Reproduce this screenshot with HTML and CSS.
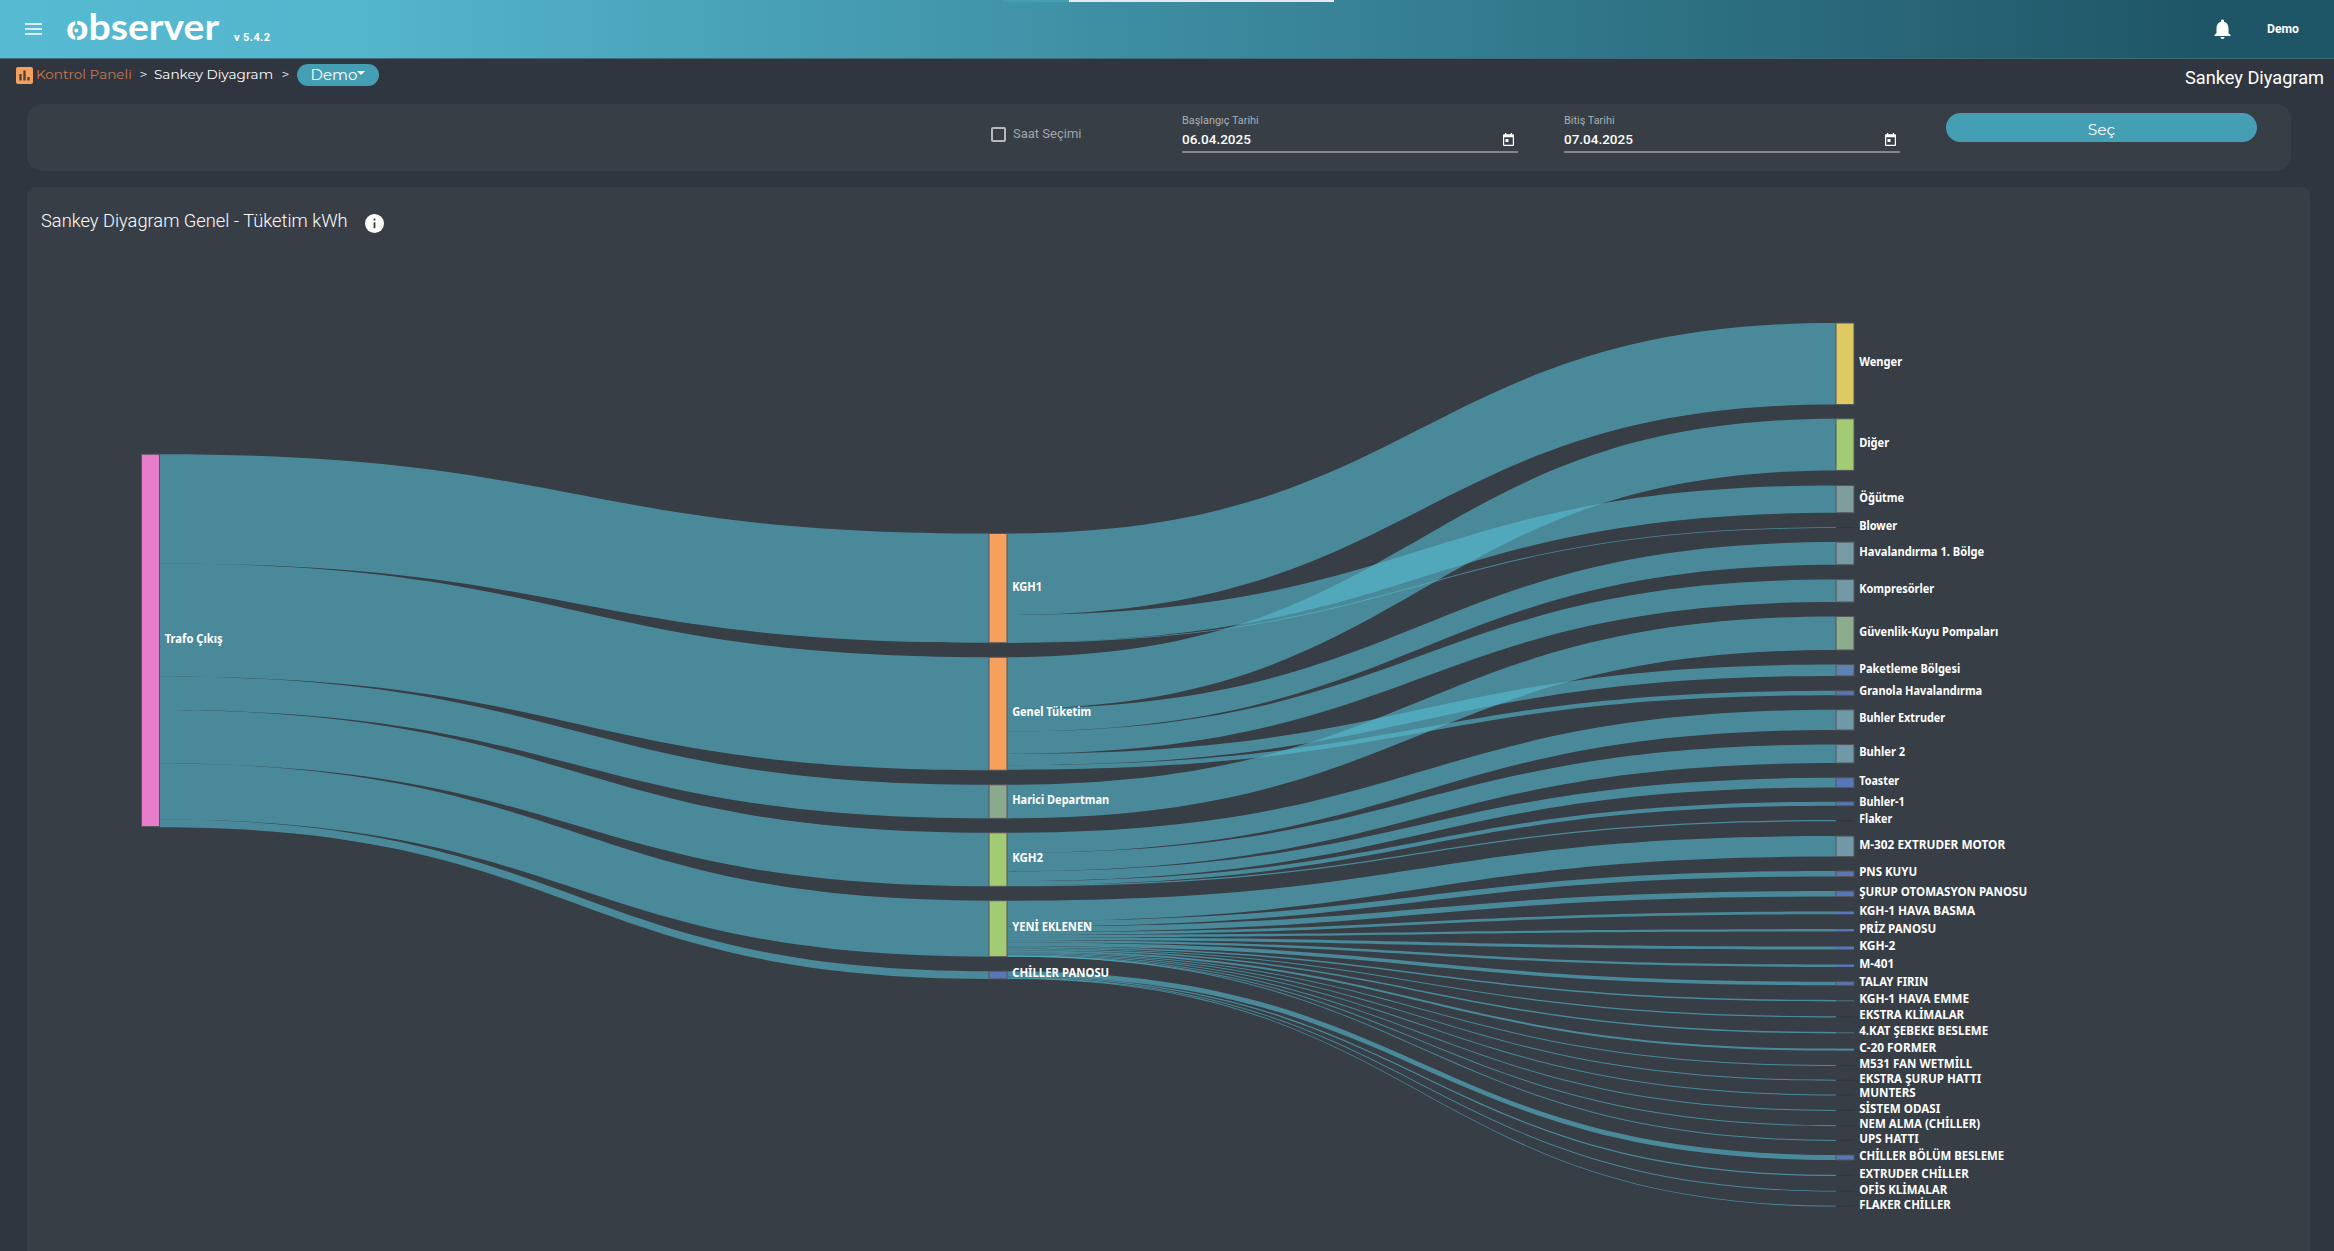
FILE: index.html
```
<!DOCTYPE html>
<html lang="tr">
<head>
  <meta charset="UTF-8" />
  <meta name="viewport" content="width=device-width, initial-scale=1.0"/>
  <title>Observer - Sankey Diyagram</title>
  <link rel="stylesheet" href="styles.css">
</head>
<body>
  <header class="topbar">
    <div class="loading-bar"></div>
    <svg class="menu-icon" viewBox="0 0 17 12" width="17" height="12"><path d="M0 1h17M0 6h17M0 11h17" stroke="#fff" stroke-width="1.7"/></svg>
    <svg class="logo" width="158" height="54" viewBox="0 -10 158 54">
      <text class="logo-text" x="0" y="29" textLength="153" lengthAdjust="spacingAndGlyphs">observer</text>
      <path d="M10.300 8v6.500M10.300 24.500v7" stroke="#55b8d0" stroke-width="2"/>
      <circle cx="10.300" cy="19.500" r="2" fill="#fff"/>
    </svg>
    <span class="version">v 5.4.2</span>
    <svg class="bell" viewBox="4 2 16 20" width="17" height="20"><path fill="#fff" d="M12 22c1.100 0 2-.9 2-2h-4c0 1.100.9 2 2 2zm6-6v-5c0-3.070-1.630-5.640-4.500-6.320V4c0-.83-.67-1.500-1.500-1.500s-1.500.67-1.500 1.500v.68C7.640 5.360 6 7.920 6 11v5l-2 2v1h16v-1l-2-2z"/></svg>
    <span class="user">Demo</span>
  </header>

  <div class="subbar">
    <nav class="breadcrumb">
      <svg class="crumb-icon" width="17" height="17" viewBox="0 0 17 17">
        <rect width="17" height="17" rx="2" fill="#f5a05c"/>
        <path d="M4.500 7v6.500M8.500 3.500v10M12.500 10v3.500" stroke="#4a4444" stroke-width="2.400"/>
      </svg>
      <a class="crumb crumb-link">Kontrol Paneli</a>
      <span class="sep">&gt;</span>
      <span class="crumb crumb-page">Sankey Diyagram</span>
      <span class="sep">&gt;</span>
      <button class="pill">Demo<span class="caret"></span></button>
    </nav>
    <h1 class="page-title">Sankey Diyagram</h1>
  </div>

  <section class="card filters">
    <label class="check"><span class="box"></span>Saat Seçimi</label>
    <div class="field">
      <span class="field-label">Başlangıç Tarihi</span>
      <div class="field-row">
        <span>06.04.2025</span>
        <svg width="11" height="13" viewBox="0 0 11 13"><path fill="#fff" fill-rule="evenodd" d="M2 0h1.300v1.300h4.400V0H9v1.300h1a1 1 0 0 1 1 1V12a1 1 0 0 1-1 1H1a1 1 0 0 1-1-1V2.300a1 1 0 0 1 1-1h1zM1.200 4.300v7.500h8.600V4.300zM2.500 6h3v3h-3z"/></svg>
      </div>
    </div>
    <div class="field">
      <span class="field-label">Bitiş Tarihi</span>
      <div class="field-row">
        <span>07.04.2025</span>
        <svg width="11" height="13" viewBox="0 0 11 13"><path fill="#fff" fill-rule="evenodd" d="M2 0h1.300v1.300h4.400V0H9v1.300h1a1 1 0 0 1 1 1V12a1 1 0 0 1-1 1H1a1 1 0 0 1-1-1V2.300a1 1 0 0 1 1-1h1zM1.200 4.300v7.500h8.600V4.300zM2.500 6h3v3h-3z"/></svg>
      </div>
    </div>
    <button class="select-btn">Seç</button>
  </section>

  <section class="card chart-card">
    <div class="chart-head">
      <h2>Sankey Diyagram Genel - Tüketim kWh</h2>
      <svg width="19" height="19" viewBox="0 0 19 19"><circle cx="9.500" cy="9.500" r="9.500" fill="#fff"/><path d="M9.500 4.600v2M9.500 8.200v6" stroke="#373e46" stroke-width="1.800"/></svg>
    </div>
    <svg id="sankey" class="sankey" width="2283" height="1010" viewBox="27 241 2283 1010"></svg>
  </section>

  <script src="sankey.js"></script>
</body>
</html>
```
FILE: styles.css
```
* {
  box-sizing: border-box;
}

body {
  margin: 0;
  height: 1251px;
  overflow: hidden;
  background: #2f3640;
  color: white;
  font-family: Roboto, sans-serif;
}

h1, h2 {
  margin: 0;
  font-weight: 400;
}

button {
  border: none;
  color: white;
  background: #459fb4;
  font-family: Montserrat, Inter, sans-serif;
}

.topbar {
  position: relative;
  display: flex;
  align-items: center;
  height: 59px;
  padding: 0 35px 0 25px;
  background: linear-gradient(90deg, #56bad2, #54b6cd 15%, #1e5566 95%);
  border-bottom: 1px solid #3f6a78;
}

.loading-bar {
  position: absolute;
  top: 0;
  left: 1003px;
  width: 331px;
  height: 2px;
  background: linear-gradient(90deg, #459fb4 66px, #e4eaec 66px);
}

.logo {
  margin: -2px 0 0 24px;
  overflow: visible;
}

.logo-text {
  font-family: Lato, sans-serif;
  font-weight: 700;
  font-size: 37px;
  fill: white;
}

.version {
  margin: 16px auto 0 10px;
  font-size: 11px;
  font-weight: 700;
  letter-spacing: 0.4px;
}

.user {
  margin: -1px 0 0 36px;
  font-size: 12.200px;
  font-weight: 700;
}

.subbar {
  display: flex;
  justify-content: space-between;
  height: 45px;
  padding: 4px 10px 0 16px;
}

.breadcrumb {
  display: flex;
  align-items: center;
  height: 22px;
  font-family: Montserrat, Inter, sans-serif;
  font-size: 13.600px;
  white-space: nowrap;
}

.crumb-icon {
  margin: 2px 3px 0 0;
}

.crumb-link {
  width: 97px;
  color: #c9794b;
}

.crumb-page {
  width: 121px;
}

.sep {
  width: 21px;
  text-align: center;
}

.pill {
  display: flex;
  align-items: center;
  justify-content: center;
  width: 82px;
  height: 22px;
  margin: 1px 0 0 1px;
  padding: 0;
  border-radius: 11px;
  font-size: 15px;
}

.caret {
  margin-bottom: 3px;
  border: 4px solid transparent;
  border-top-color: white;
  border-bottom: 0;
}

.page-title {
  margin-top: 4px;
  font-size: 18.200px;
  line-height: 22px;
}

.card {
  background: #373e46;
}

.filters {
  display: flex;
  width: 2264px;
  height: 67px;
  margin-left: 27px;
  padding: 9px 34px 0 964px;
  border-radius: 15px;
}

.check {
  display: flex;
  align-items: center;
  width: 191px;
  height: 41px;
  font-size: 13px;
  color: #a0a7aa;
}

.box {
  width: 15px;
  height: 15px;
  margin: 1px 7px 0 0;
  border: 2px solid #b5b9bc;
  border-radius: 2px;
}

.field {
  width: 336px;
  height: 40px;
  margin-right: 46px;
  border-bottom: 2px solid #82878b;
}

.field-label {
  display: block;
  padding-top: 1px;
  font-size: 10.900px;
  line-height: 14px;
  color: #a9afb2;
}

.field-row {
  display: flex;
  align-items: center;
  justify-content: space-between;
  padding-right: 4px;
  font-size: 13.500px;
  font-weight: 500;
  line-height: 22px;
}

.select-btn {
  width: 311px;
  height: 29px;
  padding: 4px 0 0;
  border-radius: 15px;
  font-size: 15.500px;
}

.chart-card {
  width: 2283px;
  height: 1080px;
  margin: 16px 0 0 27px;
  border-radius: 8px;
}

.chart-head {
  display: flex;
  align-items: center;
  height: 54px;
  padding: 13px 0 0 14px;
}

.chart-head h2 {
  width: 324px;
  font-size: 18.300px;
  font-weight: 300;
  white-space: nowrap;
}

.chart-head svg {
  margin-top: 6px;
}

.sankey {
  display: block;
}

.link {
  fill: #57bdd2;
  fill-opacity: 0.6;
}

.node {
  stroke: #55555a;
  stroke-width: 1;
}

.label {
  fill: white;
  font-family: "Segoe UI", "Noto Sans", sans-serif;
  font-size: 11.800px;
  font-weight: 700;
}
```
FILE: sankey.js
```
const NS = "http://www.w3.org/2000/svg";
const svg = document.getElementById("sankey");
const NODE_W = 18;

// name, top, height, color, label width
const root = ["Trafo Çıkış", 454.2, 372.3, "#e77ccb", 58];

const groups = [
  { node: ["KGH1", 533.5, 109.3, "#f5a05c", 30], children: [
    ["Wenger", 323, 81.5, "#dfc963", 43],
    ["Öğütme", 485.5, 27.3, "#7f9d9c", 45],
    ["Blower", 527.2, 0.9, "", 38]
  ]},
  { node: ["Genel Tüketim", 657.2, 113, "#f5a05c", 79], children: [
    ["Diğer", 418.8, 51.6, "#a2cb74", 30],
    ["Havalandırma 1. Bölge", 542.1, 22.7, "#769ba5", 125],
    ["Kompresörler", 579.6, 22.4, "#7399a6", 75],
    ["Paketleme Bölgesi", 664.6, 11.3, "#5f82b5", 101],
    ["Granola Havalandırma", 690.8, 4.5, "#5877b8", 123]
  ]},
  { node: ["Harici Departman", 784.8, 33.6, "#8ba98d", 97], children: [
    ["Güvenlik-Kuyu Pompaları", 616.4, 33.6, "#8cab8f", 139]
  ]},
  { node: ["KGH2", 832.8, 53.5, "#a2cb74", 31], children: [
    ["Buhler Extruder", 709.8, 20.2, "#6f99a7", 86],
    ["Buhler 2", 744.6, 18.4, "#6f99a7", 46],
    ["Toaster", 777.8, 9.7, "#5877b8", 40],
    ["Buhler-1", 801.8, 4, "#5877b8", 45.5],
    ["Flaker", 820, 1.3, "", 33]
  ]},
  { node: ["YENİ EKLENEN", 900.7, 56, "#a2cb74", 80], children: [
    ["M-302 EXTRUDER MOTOR", 836.1, 20.4, "#7198a6", 146],
    ["PNS KUYU", 871, 5.5, "#5877b8", 58],
    ["ŞURUP OTOMASYON PANOSU", 891, 5.5, "#5877b8", 168],
    ["KGH-1 HAVA BASMA", 911.5, 2.8, "#5877b8", 116],
    ["PRİZ PANOSU", 929.1, 2.3, "#5877b8", 77],
    ["KGH-2", 946.5, 3, "#5877b8", 36],
    ["M-401", 964.5, 2.4, "#5877b8", 35],
    ["TALAY FIRIN", 981.7, 3.6, "#5877b8", 69],
    ["KGH-1 HAVA EMME", 999.9, 1.5, "#47646e", 110],
    ["EKSTRA KLİMALAR", 1016.3, 1.1, "", 105],
    ["4.KAT ŞEBEKE BESLEME", 1031.9, 1.5, "#47646e", 129],
    ["C-20 FORMER", 1048.6, 2, "#4f8ba0", 77],
    ["M531 FAN WETMİLL", 1065, 1, "", 113],
    ["EKSTRA ŞURUP HATTI", 1079.7, 1, "", 122],
    ["MUNTERS", 1094.5, 1, "", 56.5],
    ["SİSTEM ODASI", 1109.9, 1, "", 81],
    ["NEM ALMA (CHİLLER)", 1125.2, 1, "", 121],
    ["UPS HATTI", 1139.9, 1, "", 59.5]
  ]},
  { node: ["CHİLLER PANOSU", 971.2, 7.7, "#5877b8", 97], children: [
    ["CHİLLER BÖLÜM BESLEME", 1155, 5, "#5877b8", 145],
    ["EXTRUDER CHİLLER", 1174.8, 1.3, "", 109.5],
    ["OFİS KLİMALAR", 1190.7, 0.9, "", 88],
    ["FLAKER CHİLLER", 1205.7, 0.9, "", 91.5]
  ]}
];

function add(tag, attrs, text) {
  const el = document.createElementNS(NS, tag);
  for (const key in attrs) el.setAttribute(key, attrs[key]);
  if (text) el.textContent = text;
  svg.appendChild(el);
}

function drawLink(x1, y1, x2, y2, h) {
  const mid = (x1 + x2) / 2;
  add("path", {
    class: "link",
    d: `M${x1} ${y1}C${mid} ${y1} ${mid} ${y2} ${x2} ${y2}V${y2 + h}C${mid} ${y2 + h} ${mid} ${y1 + h} ${x1} ${y1 + h}Z`
  });
}

function drawNode(x, [name, y, h, color, width]) {
  if (color && h > 3) {
    add("rect", { class: "node", x, y, width: NODE_W, height: h, fill: color });
  } else {
    add("rect", { x, y, width: NODE_W, height: h, fill: color || "#30373e" });
  }
  add("text", { class: "label", x: x + NODE_W + 5.2, y: y + h / 2 + 2.4, textLength: width, lengthAdjust: "spacingAndGlyphs" }, name);
}

let rootY = root[1];
groups.forEach(({ node, children }) => {
  drawLink(160, rootY, 989, node[1], node[2]);
  rootY += node[2];

  let y = node[1];
  const bottom = node[1] + node[2];
  children.forEach(child => {
    // thin links never leave below the node
    drawLink(1007, Math.min(y, bottom - child[2]), 1836, child[1], child[2]);
    y += child[2];
  });
});

drawNode(141.5, root);
groups.forEach(({ node, children }) => {
  drawNode(989, node);
  children.forEach(child => drawNode(1836, child));
});
```
